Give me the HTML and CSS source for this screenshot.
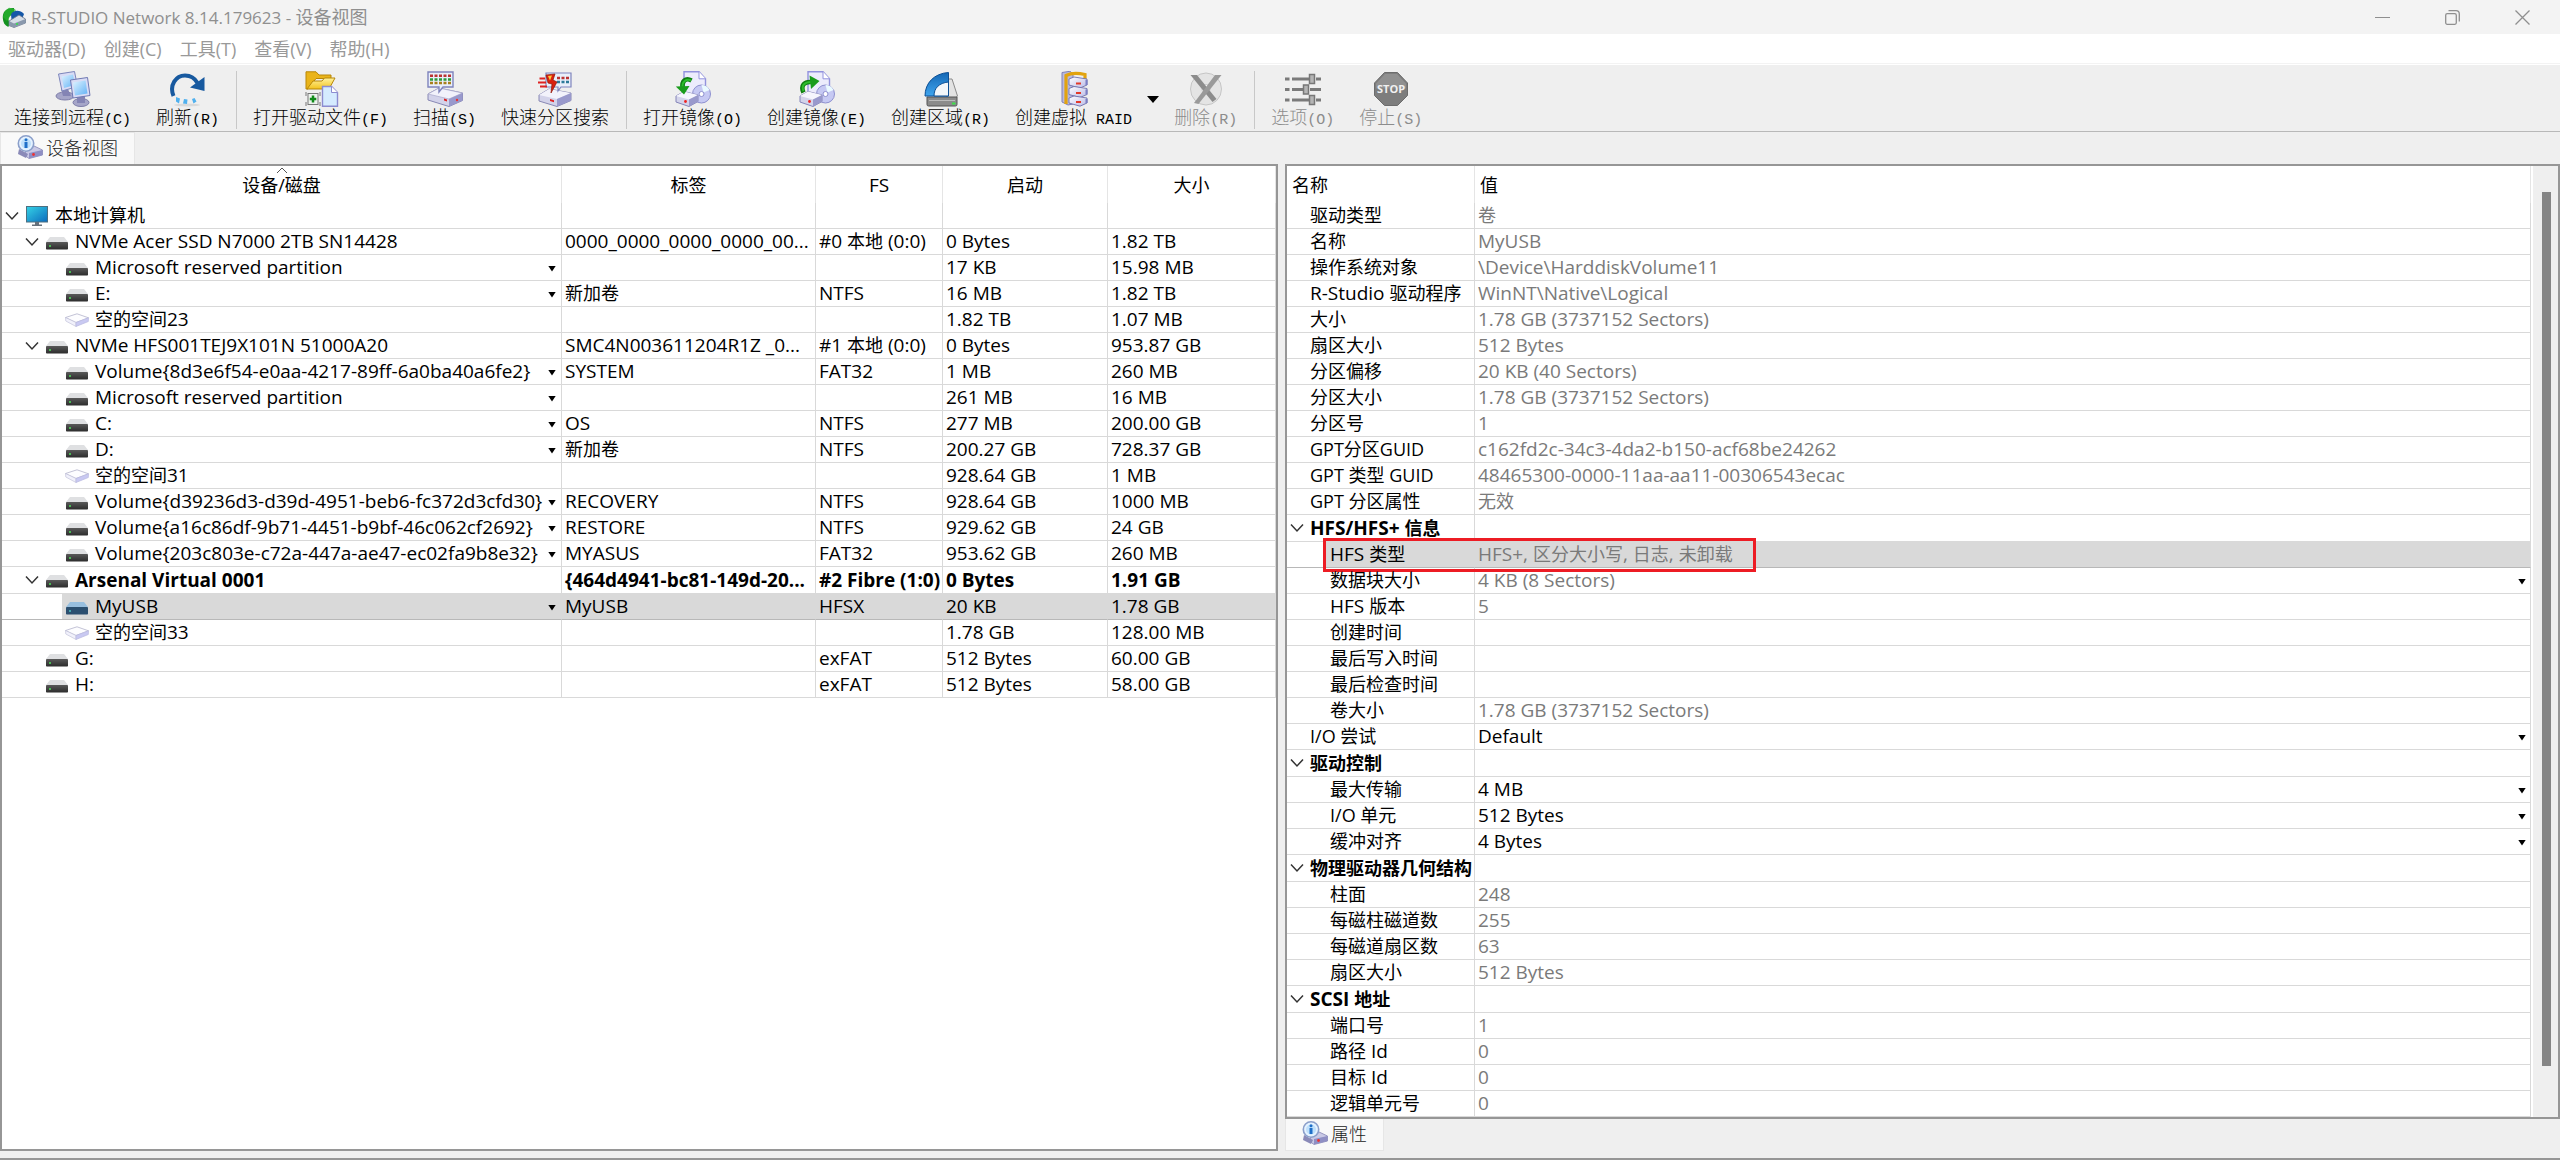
FILE: index.html
```html
<!DOCTYPE html>
<html lang="zh-CN">
<head>
<meta charset="utf-8">
<title>R-STUDIO Network 8.14.179623 - 设备视图</title>
<link rel="stylesheet" href="styles.css">
</head>
<body>
<svg class="defs" width="0" height="0" aria-hidden="true">
  <defs>
    <linearGradient id="g-screen" x1="0" y1="0" x2="1" y2="1"><stop offset="0" stop-color="#35d3e6"/><stop offset="1" stop-color="#0c6bbd"/></linearGradient>
    <linearGradient id="g-lcd" x1="0" y1="0" x2="1" y2="1"><stop offset="0" stop-color="#dff3ff"/><stop offset="1" stop-color="#62b2f5"/></linearGradient>
    <linearGradient id="g-box" x1="0" y1="0" x2="0" y2="1"><stop offset="0" stop-color="#595959"/><stop offset="1" stop-color="#2c2c2c"/></linearGradient>
    <linearGradient id="g-arc" x1="0" y1="0" x2="0" y2="1"><stop offset="0" stop-color="#1467b5"/><stop offset="1" stop-color="#3fa5ee"/></linearGradient>
    <linearGradient id="g-folder" x1="0" y1="0" x2="0" y2="1"><stop offset="0" stop-color="#fff3a0"/><stop offset="1" stop-color="#f3c21c"/></linearGradient>
    <linearGradient id="g-lav" x1="0" y1="0" x2="1" y2="1"><stop offset="0" stop-color="#ffffff"/><stop offset="1" stop-color="#b9b9e6"/></linearGradient>
  </defs>
  <symbol id="i-chevron" viewBox="0 0 14 10"><path d="M1 1.500 7 8l6-6.500" fill="none" stroke="#333" stroke-width="1.500"/></symbol>
  <symbol id="i-computer" viewBox="0 0 22 20"><rect x=".5" y=".5" width="21" height="15.500" fill="url(#g-screen)" stroke="#4d6f80"/><path d="M9 16h4v2.500h3V20H6v-1.500h3z" fill="#66707a"/></symbol>
  <symbol id="i-drive" viewBox="0 0 22 14"><path d="M4 1h14l4 5H0z" fill="#dfe0e2"/><rect y="6" width="22" height="7.500" rx=".8" fill="url(#g-box)"/><circle cx="4" cy="10" r="1" fill="#4ce05a"/></symbol>
  <symbol id="i-drive-sel" viewBox="0 0 22 14"><path d="M4 1h14l4 5H0z" fill="#98bfdf"/><rect y="6" width="22" height="7.500" rx=".8" fill="#2b4f70"/><circle cx="4" cy="10" r="1" fill="#4cc0c0"/></symbol>
  <symbol id="i-free" viewBox="0 0 24 14"><path d="M.5 4.500 12 .8l11.500 4L11 9.500z" fill="#fdfdff" stroke="#b4b4cc" stroke-width=".8"/><path d="M.5 4.500 11 9.500v4L.8 8z" fill="#f1f1fb" stroke="#c3c3da" stroke-width=".7"/><path d="M23.500 4.800 11 9.500v4l12.300-5z" fill="#c9c9f2" stroke="#b9b9e0" stroke-width=".7"/></symbol>
  <symbol id="i-tab" viewBox="0 0 26 24"><path d="m9 13 6-3 10.500 5v5L12 23.500l-4-3z" fill="#c9c9e6" stroke="#8585b5" stroke-width=".8"/><path d="m12 18 13.500-3v5L12 23.500z" fill="#8f8fc4"/><circle cx="16.500" cy="19.500" r="1.400" fill="#e33"/><path d="M2 14 1 19l8 4 2-4z" fill="#8a8ab8"/><circle cx="9" cy="8.500" r="7.700" fill="#e4f2ff" stroke="#8b9fca" stroke-width="1.600"/><circle cx="9" cy="8.500" r="5" fill="#bfe0fb"/><circle cx="9" cy="4.700" r="1.500" fill="#1f6fc8"/><path d="M7.500 7h3v6h-3z" fill="#1f6fc8"/></symbol>
  <symbol id="i-app" viewBox="0 0 24 21"><path d="M12 1C4 .5.500 5 .8 11c.2 4.500 2 7.500 5.500 9l1.700-4C5.500 13 6 8 12 7.500z" fill="#13911f"/><path d="M3 4 7 .8 13 2l2 4-6 2-4 6-4-4z" fill="#2bb531" opacity=".7"/><path d="M9 7.500C11 3 18 2.500 22 7l-1.500 4-11 2z" fill="#1457a8"/><path d="m7 14 10-6 6.500 4v4L12 20.500 7 18.500z" fill="#d5dde6" stroke="#65748a" stroke-width=".8"/><path d="m7 14 5 2.500L23.500 12v4L12 20.500 7 18.500z" fill="#8a99ad"/><circle cx="15" cy="17" r="1.100" fill="#35e04c"/></symbol>

  <symbol id="t-connect" viewBox="0 0 36 36"><ellipse cx="10" cy="25" rx="9" ry="4" fill="#a5a5c8" stroke="#7d7da8"/><ellipse cx="26" cy="31.500" rx="8" ry="4" fill="#a5a5c8" stroke="#7d7da8"/><path d="M6 18h7l3 7H8zM22 25h8v7h-8z" fill="#8484b4"/><path d="m3.500 3 16-2.500 3 15L7 20z" fill="#d9dcf5" stroke="#7c85bb"/><path d="m6.500 5.500 11.500-2 2 10.500-11 3z" fill="url(#g-lcd)"/><path d="m15.500 9 17-2.500 2.500 18-17 2.500z" fill="#d9dcf5" stroke="#6f78b3"/><path d="M18 11.500 30.500 9.500l2 13-12.500 2z" fill="url(#g-lcd)"/></symbol>
  <symbol id="t-refresh" viewBox="0 0 36 36"><ellipse cx="17" cy="34" rx="13" ry="1.500" fill="#d9d9d9"/><path d="M3.500 25C-1 14 6 4.500 15 4.500c6 0 10 3 12.500 7.500" fill="none" stroke="#17599f" stroke-width="4"/><path d="M34.500 6v14L20 16.500z" fill="#17599f"/><path d="m6 26 4 1.500-1 5-3-2zM14 28l3.500.5-.5 4.500-4-.5zM22 28l2.500-1 2 3.500-3 2z" fill="#4fb0ee"/></symbol>
  <symbol id="t-openfile" viewBox="0 0 36 36"><path d="M3 18V.8h10l3 3.200h12v3.500H13L5 18z" fill="#eab41a" stroke="#b88708"/><path d="m4 18 6-8h9l2.500-3H32l-6 11z" fill="url(#g-folder)" stroke="#b88708"/><rect x="5" y="22.500" width="10" height="11" fill="#eef3ee" stroke="#777"/><path d="M3 21v4M3 31v4M17 21v4M17 31v4" stroke="#777"/><path d="M10 24.500v7M6.800 28h6.500" stroke="#108a18" stroke-width="2.500"/><path d="M19.500 15.500h9l6 6v13.700h-15z" fill="#d5ebff" stroke="#8c8cd0" stroke-width="1.400"/><path d="M28.500 15.500v6h6" fill="#fff" stroke="#8c8cd0"/></symbol>
  <symbol id="t-scan" viewBox="0 0 36 36"><path d="m1 23 11-6 23.500 5v7.500L22 35.500 1 29z" fill="#d3d3ea" stroke="#8888b4"/><path d="m1 23 11-6 23.500 5L22 28z" fill="#f2f2fb" stroke="#a9a9cc" stroke-width=".7"/><path d="M22 28l13.500-6v7.500L22 35.500z" fill="#9999cc"/><path d="m17 27.500 3 1v2l-3-1z" fill="#d22"/><circle cx="30" cy="29" r="1.200" fill="#e33"/><path d="M1 1h25v15H16l-4 5v-5H1z" fill="#e9effa" stroke="#7f84bd" stroke-width="1.400"/><path d="M3 4.800h21" stroke="#b33" stroke-width="2.400" stroke-dasharray="3 1.500"/><path d="M3 8.500h21" stroke="#2c9a3a" stroke-width="2.400" stroke-dasharray="3 1.500"/><path d="M3 12h21" stroke="#a8801c" stroke-width="2.400" stroke-dasharray="3 1.500"/></symbol>
  <symbol id="t-fast" viewBox="0 0 36 36"><path d="m2 24 10-6 22 4v7.500L20 35.500 2 30z" fill="#d3d3ea" stroke="#8888b4"/><path d="m2 24 10-6 22 4-14 6z" fill="#f2f2fb"/><path d="M20 28l14-6v7.500L20 35.500z" fill="#9999cc"/><path d="m13 28 4 1.200v2L13 30z" fill="#d22"/><path d="M9 2h25v14H24l-3 4v-4H9z" fill="#e9effa" stroke="#7f84bd" stroke-width="1.200"/><path d="M20 7h12" stroke="#b33" stroke-width="2.500" stroke-dasharray="3 1.500"/><path d="M20 11h12" stroke="#2c7a9a" stroke-width="2.500" stroke-dasharray="3 1.500"/><path d="M9 4 18 3l-2 6 4 2-6 11 1-9-4-1z" fill="#d9210f" stroke="#8f1508" stroke-width=".7"/><path d="m11 5 4-.5-2 5z" fill="#ffcb3a"/><path d="M2.500 7.500H8M1 11.500h8M3 15.500h7" stroke="#d22" stroke-width="1.800"/></symbol>
  <symbol id="t-imgbase" viewBox="0 0 36 36"><path d="M9 .8h15l6.500 7V30H9z" fill="#ececfc" stroke="#9292dd" stroke-width="1.400"/><path d="M24 .8v7h6.500" fill="#fff" stroke="#9292dd"/><circle cx="26.500" cy="23" r="9" fill="#c6c9f3" stroke="#8e90cf"/><path d="M26.500 14a9 9 0 0 1 8 5l-6 2.500z" fill="#eafaff"/><circle cx="26.500" cy="23" r="2.500" fill="#fff" stroke="#8e90cf"/><path d="m1 25 8-4.500 14 3.500v6.500L14 35.500 1 31z" fill="#d3d3ea" stroke="#8585b8"/><path d="m1 25 8-4.500 14 3.500-9 4.500z" fill="#f5f5fd"/><path d="m14 28.500 9-4.500v6.500L14 35.500z" fill="#9999cc"/><circle cx="10.500" cy="30.500" r="1.400" fill="#e22"/></symbol>
  <symbol id="t-openimg" viewBox="0 0 36 36"><use href="#t-imgbase"/><path d="M16.500 9.500C10.500 6 6.500 10.500 7.500 17" fill="none" stroke="#0f7d12" stroke-width="4.500"/><path d="M16 9.500C11 7.500 7 10.500 7.500 16" fill="none" stroke="#2cbd2c" stroke-width="2"/><path d="M.8 15.500 14.500 15 9 23.500z" fill="#1a9c1c"/></symbol>
  <symbol id="t-makeimg" viewBox="0 0 36 36"><use href="#t-imgbase"/><path d="M4.500 21.500C1 14 6 10.500 12 11" fill="none" stroke="#0f7d12" stroke-width="4.500"/><path d="M4.500 20C2 14 6 11 12 11" fill="none" stroke="#2cbd2c" stroke-width="2"/><path d="M10.500 4.500 20.500 10l-8.500 8z" fill="#1a9c1c"/></symbol>
  <symbol id="t-region" viewBox="0 0 36 36"><path d="M24 8h5l5.500 17-2 2H24z" fill="#e3e3e3" stroke="#8a8a8a"/><path d="M4 26h30v7.500q0 1.500-1.500 1.500h-27Q4 35 4 33.500z" fill="#8b8b8b" stroke="#555"/><path d="M6 29.500h26" stroke="#bbb"/><path d="M29 32.500h3.500" stroke="#3ce046" stroke-width="2"/><path d="M2 25C2 12 11 2.500 25.500 1.500V25z" fill="url(#g-arc)" stroke="#0d4f94"/><path d="M11 25c0-8 5-13 14.500-14V25z" fill="#f2f6fa" stroke="#0d4f94"/></symbol>
  <symbol id="t-raid" viewBox="0 0 36 36"><path d="m6 1.500 8-1.200L17 3v30l-5 1-6-3z" fill="#b9b9dd" stroke="#8080b4"/><path d="M10 33V4.500Q17 1 29 3.500v5" fill="none" stroke="#e2a30e" stroke-width="3.200"/><g stroke="#6e70ac" stroke-width=".9"><path d="m13 8 5-2 13 2v6l-7 3-11-3z" fill="url(#g-lav)"/><path d="m13 17.500 5-2 13 2v6l-7 3-11-3z" fill="url(#g-lav)"/><path d="m13 27 5-2 13 2v5l-7 3.200L13 32z" fill="url(#g-lav)"/></g><path d="M20 12.500h5M20 22h5M20 31h5" stroke="#e33a2a" stroke-width="2"/><path d="M30.500 9v5M30.500 18.500v5M30.500 28v4" stroke="#7b7fc4" stroke-width="2"/></symbol>
  <symbol id="t-delete" viewBox="0 0 36 36"><ellipse cx="18" cy="18" rx="15.500" ry="16" fill="#e4e4e4" stroke="#c6c6c6"/><ellipse cx="18" cy="18" rx="4" ry="4.500" fill="#fafafa" stroke="#c9c9c9"/><path d="M2.500 4H9l19.500 24-4 3z" fill="#8c8c8c"/><path d="M33.500 4H27L6 32l4.500 1z" fill="#9a9a9a"/></symbol>
  <symbol id="t-options" viewBox="0 0 36 36"><path d="M0 8h4.500M7 8h17M31 8h5M0 18.500h4.500M7 18.500h11M25 18.500h11M0 29h4.500M7 29h17M31 29h5" stroke="#7a7a7a" stroke-width="3"/><g fill="#b5b5b5" stroke="#777" stroke-width="1.500"><rect x="24.500" y="3.500" width="5" height="9"/><rect x="18.500" y="14" width="5" height="9"/><rect x="24.500" y="24.500" width="5" height="9"/></g></symbol>
</svg>

<header class="titlebar">
  <svg class="app-icon"><use href="#i-app"/></svg>
  <h1 class="title">R-STUDIO Network 8.14.179623 - <span class="zh">设备视图</span></h1>
  <div class="window-buttons">
    <button aria-label="最小化"><svg width="15" height="15"><path d="M0 7.500h15" stroke="#8f8f8f"/></svg></button>
    <button aria-label="还原"><svg width="15" height="15" fill="none" stroke="#8f8f8f" stroke-width="1.300"><rect x=".7" y="3.700" width="10.600" height="10.600" rx="1.500"/><path d="M3.500.7H11Q14.300.7 14.300 4v7.500"/></svg></button>
    <button aria-label="关闭"><svg width="15" height="15"><path d="m.5.500 14 14m0-14-14 14" stroke="#8f8f8f" stroke-width="1.300"/></svg></button>
  </div>
</header>
<nav class="menubar">
  <button>驱动器(D)</button>
  <button>创建(C)</button>
  <button>工具(T)</button>
  <button>查看(V)</button>
  <button>帮助(H)</button>
</nav>
<div class="toolbar">
  <button class="tool"><svg><use href="#t-connect"/></svg><span class="label">连接到远程<span class="mono">(C)</span></span></button>
  <button class="tool"><svg><use href="#t-refresh"/></svg><span class="label">刷新<span class="mono">(R)</span></span></button>
  <i class="sep"></i>
  <button class="tool"><svg><use href="#t-openfile"/></svg><span class="label">打开驱动文件<span class="mono">(F)</span></span></button>
  <button class="tool"><svg><use href="#t-scan"/></svg><span class="label">扫描<span class="mono">(S)</span></span></button>
  <button class="tool"><svg><use href="#t-fast"/></svg><span class="label">快速分区搜索</span></button>
  <i class="sep"></i>
  <button class="tool"><svg><use href="#t-openimg"/></svg><span class="label">打开镜像<span class="mono">(O)</span></span></button>
  <button class="tool"><svg><use href="#t-makeimg"/></svg><span class="label">创建镜像<span class="mono">(E)</span></span></button>
  <button class="tool"><svg><use href="#t-region"/></svg><span class="label">创建区域<span class="mono">(R)</span></span></button>
  <button class="tool"><svg><use href="#t-raid"/></svg><span class="label">创建虚拟<span class="mono"> RAID</span></span></button>
  <button class="tool-drop" aria-label="更多"><svg width="12" height="7"><path d="M0 0h12L6 7z"/></svg></button>
  <button class="tool" disabled><svg><use href="#t-delete"/></svg><span class="label">删除<span class="mono">(R)</span></span></button>
  <i class="sep"></i>
  <button class="tool" disabled><svg><use href="#t-options"/></svg><span class="label">选项<span class="mono">(O)</span></span></button>
  <button class="tool" disabled><svg viewBox="0 0 36 36"><path d="M11.500 1.500h13L34.500 12v12.500l-10 10h-13l-10-10V12z" fill="#7d7d7d" stroke="#6c6c6c"/><path d="M12 3h12l9 9.500v5H3v-5z" fill="#909090"/><text x="18" y="22" text-anchor="middle" class="stop-text">STOP</text></svg><span class="label">停止<span class="mono">(S)</span></span></button>
</div>
<div class="tabs top">
  <button class="tab"><svg><use href="#i-tab"/></svg>设备视图</button>
</div>

<main class="panes">
  <section class="pane devices">
    <table class="grid">
      <colgroup><col class="c-device"><col class="c-label"><col class="c-fs"><col class="c-start"><col></colgroup>
      <thead>
        <tr><th class="zh"><svg class="sort" width="12" height="7"><path d="m1 6 5-5 5 5" fill="none" stroke="#555"/></svg>设备/磁盘</th><th class="zh">标签</th><th>FS</th><th class="zh">启动</th><th class="zh">大小</th></tr>
      </thead>
      <tbody>
        <tr><td><div class="node d0"><button class="toggle" aria-label="折叠"><svg><use href="#i-chevron"/></svg></button><svg class="ic pc"><use href="#i-computer"/></svg><span class="name zh">本地计算机</span></div></td><td></td><td></td><td></td><td></td></tr>
        <tr><td><div class="node d1"><button class="toggle" aria-label="折叠"><svg><use href="#i-chevron"/></svg></button><svg class="ic"><use href="#i-drive"/></svg><span class="name">NVMe Acer SSD N7000 2TB SN14428</span></div></td><td>0000_0000_0000_0000_00...</td><td>#0 <span class="zh">本地</span> (0:0)</td><td>0 Bytes</td><td>1.82 TB</td></tr>
        <tr><td><div class="node d3"><svg class="ic"><use href="#i-drive"/></svg><span class="name">Microsoft reserved partition</span><button class="drop" aria-label="展开"></button></div></td><td></td><td></td><td>17 KB</td><td>15.98 MB</td></tr>
        <tr><td><div class="node d3"><svg class="ic"><use href="#i-drive"/></svg><span class="name">E:</span><button class="drop" aria-label="展开"></button></div></td><td class="zh">新加卷</td><td>NTFS</td><td>16 MB</td><td>1.82 TB</td></tr>
        <tr><td><div class="node d3"><svg class="ic free"><use href="#i-free"/></svg><span class="name"><span class="zh">空的空间</span>23</span></div></td><td></td><td></td><td>1.82 TB</td><td>1.07 MB</td></tr>
        <tr><td><div class="node d1"><button class="toggle" aria-label="折叠"><svg><use href="#i-chevron"/></svg></button><svg class="ic"><use href="#i-drive"/></svg><span class="name">NVMe HFS001TEJ9X101N 51000A20</span></div></td><td>SMC4N003611204R1Z _0...</td><td>#1 <span class="zh">本地</span> (0:0)</td><td>0 Bytes</td><td>953.87 GB</td></tr>
        <tr><td><div class="node d3"><svg class="ic"><use href="#i-drive"/></svg><span class="name">Volume{8d3e6f54-e0aa-4217-89ff-6a0ba40a6fe2}</span><button class="drop" aria-label="展开"></button></div></td><td>SYSTEM</td><td>FAT32</td><td>1 MB</td><td>260 MB</td></tr>
        <tr><td><div class="node d3"><svg class="ic"><use href="#i-drive"/></svg><span class="name">Microsoft reserved partition</span><button class="drop" aria-label="展开"></button></div></td><td></td><td></td><td>261 MB</td><td>16 MB</td></tr>
        <tr><td><div class="node d3"><svg class="ic"><use href="#i-drive"/></svg><span class="name">C:</span><button class="drop" aria-label="展开"></button></div></td><td>OS</td><td>NTFS</td><td>277 MB</td><td>200.00 GB</td></tr>
        <tr><td><div class="node d3"><svg class="ic"><use href="#i-drive"/></svg><span class="name">D:</span><button class="drop" aria-label="展开"></button></div></td><td class="zh">新加卷</td><td>NTFS</td><td>200.27 GB</td><td>728.37 GB</td></tr>
        <tr><td><div class="node d3"><svg class="ic free"><use href="#i-free"/></svg><span class="name"><span class="zh">空的空间</span>31</span></div></td><td></td><td></td><td>928.64 GB</td><td>1 MB</td></tr>
        <tr><td><div class="node d3"><svg class="ic"><use href="#i-drive"/></svg><span class="name">Volume{d39236d3-d39d-4951-beb6-fc372d3cfd30}</span><button class="drop" aria-label="展开"></button></div></td><td>RECOVERY</td><td>NTFS</td><td>928.64 GB</td><td>1000 MB</td></tr>
        <tr><td><div class="node d3"><svg class="ic"><use href="#i-drive"/></svg><span class="name">Volume{a16c86df-9b71-4451-b9bf-46c062cf2692}</span><button class="drop" aria-label="展开"></button></div></td><td>RESTORE</td><td>NTFS</td><td>929.62 GB</td><td>24 GB</td></tr>
        <tr><td><div class="node d3"><svg class="ic"><use href="#i-drive"/></svg><span class="name">Volume{203c803e-c72a-447a-ae47-ec02fa9b8e32}</span><button class="drop" aria-label="展开"></button></div></td><td>MYASUS</td><td>FAT32</td><td>953.62 GB</td><td>260 MB</td></tr>
        <tr class="strong"><td><div class="node d1"><button class="toggle" aria-label="折叠"><svg><use href="#i-chevron"/></svg></button><svg class="ic"><use href="#i-drive"/></svg><span class="name">Arsenal Virtual 0001</span></div></td><td>{464d4941-bc81-149d-20...</td><td>#2 Fibre (1:0)</td><td>0 Bytes</td><td>1.91 GB</td></tr>
        <tr class="selected"><td><div class="node d3"><svg class="ic"><use href="#i-drive-sel"/></svg><span class="name">MyUSB</span><button class="drop" aria-label="展开"></button></div></td><td>MyUSB</td><td>HFSX</td><td>20 KB</td><td>1.78 GB</td></tr>
        <tr><td><div class="node d3"><svg class="ic free"><use href="#i-free"/></svg><span class="name"><span class="zh">空的空间</span>33</span></div></td><td></td><td></td><td>1.78 GB</td><td>128.00 MB</td></tr>
        <tr><td><div class="node d2"><svg class="ic"><use href="#i-drive"/></svg><span class="name">G:</span></div></td><td></td><td>exFAT</td><td>512 Bytes</td><td>60.00 GB</td></tr>
        <tr><td><div class="node d2"><svg class="ic"><use href="#i-drive"/></svg><span class="name">H:</span></div></td><td></td><td>exFAT</td><td>512 Bytes</td><td>58.00 GB</td></tr>
      </tbody>
    </table>
  </section>

  <section class="side">
    <div class="pane props">
      <table class="grid">
        <colgroup><col class="c-prop"><col></colgroup>
        <thead><tr><th class="zh">名称</th><th class="zh">值</th></tr></thead>
        <tbody>
          <tr><td><div class="prop p1 zh">驱动类型</div></td><td class="ro zh">卷</td></tr>
          <tr><td><div class="prop p1 zh">名称</div></td><td class="ro">MyUSB</td></tr>
          <tr><td><div class="prop p1 zh">操作系统对象</div></td><td class="ro">\Device\HarddiskVolume11</td></tr>
          <tr><td><div class="prop p1">R-Studio <span class="zh">驱动程序</span></div></td><td class="ro">WinNT\Native\Logical</td></tr>
          <tr><td><div class="prop p1 zh">大小</div></td><td class="ro">1.78 GB (3737152 Sectors)</td></tr>
          <tr><td><div class="prop p1 zh">扇区大小</div></td><td class="ro">512 Bytes</td></tr>
          <tr><td><div class="prop p1 zh">分区偏移</div></td><td class="ro">20 KB (40 Sectors)</td></tr>
          <tr><td><div class="prop p1 zh">分区大小</div></td><td class="ro">1.78 GB (3737152 Sectors)</td></tr>
          <tr><td><div class="prop p1 zh">分区号</div></td><td class="ro">1</td></tr>
          <tr><td><div class="prop p1 zh">GPT分区GUID</div></td><td class="ro">c162fd2c-34c3-4da2-b150-acf68be24262</td></tr>
          <tr><td><div class="prop p1 zh">GPT 类型 GUID</div></td><td class="ro">48465300-0000-11aa-aa11-00306543ecac</td></tr>
          <tr><td><div class="prop p1 zh">GPT 分区属性</div></td><td class="ro zh">无效</td></tr>
          <tr class="strong"><td><div class="prop"><button class="toggle" aria-label="折叠"><svg><use href="#i-chevron"/></svg></button>HFS/HFS+ <span class="zh">信息</span></div></td><td></td></tr>
          <tr class="selected"><td><div class="prop p2">HFS <span class="zh">类型</span><span class="callout"></span></div></td><td class="ro">HFS+, <span class="zh">区分大小写</span>, <span class="zh">日志</span>, <span class="zh">未卸载</span></td></tr>
          <tr><td><div class="prop p2 zh">数据块大小</div></td><td class="ro"><div class="value">4 KB (8 Sectors)<button class="drop" aria-label="展开"></button></div></td></tr>
          <tr><td><div class="prop p2">HFS <span class="zh">版本</span></div></td><td class="ro">5</td></tr>
          <tr><td><div class="prop p2 zh">创建时间</div></td><td></td></tr>
          <tr><td><div class="prop p2 zh">最后写入时间</div></td><td></td></tr>
          <tr><td><div class="prop p2 zh">最后检查时间</div></td><td></td></tr>
          <tr><td><div class="prop p2 zh">卷大小</div></td><td class="ro">1.78 GB (3737152 Sectors)</td></tr>
          <tr><td><div class="prop p1 zh">I/O 尝试</div></td><td><div class="value">Default<button class="drop" aria-label="展开"></button></div></td></tr>
          <tr class="strong"><td><div class="prop zh"><button class="toggle" aria-label="折叠"><svg><use href="#i-chevron"/></svg></button>驱动控制</div></td><td></td></tr>
          <tr><td><div class="prop p2 zh">最大传输</div></td><td><div class="value">4 MB<button class="drop" aria-label="展开"></button></div></td></tr>
          <tr><td><div class="prop p2 zh">I/O 单元</div></td><td><div class="value">512 Bytes<button class="drop" aria-label="展开"></button></div></td></tr>
          <tr><td><div class="prop p2 zh">缓冲对齐</div></td><td><div class="value">4 Bytes<button class="drop" aria-label="展开"></button></div></td></tr>
          <tr class="strong"><td><div class="prop zh"><button class="toggle" aria-label="折叠"><svg><use href="#i-chevron"/></svg></button>物理驱动器几何结构</div></td><td></td></tr>
          <tr><td><div class="prop p2 zh">柱面</div></td><td class="ro">248</td></tr>
          <tr><td><div class="prop p2 zh">每磁柱磁道数</div></td><td class="ro">255</td></tr>
          <tr><td><div class="prop p2 zh">每磁道扇区数</div></td><td class="ro">63</td></tr>
          <tr><td><div class="prop p2 zh">扇区大小</div></td><td class="ro">512 Bytes</td></tr>
          <tr class="strong"><td><div class="prop"><button class="toggle" aria-label="折叠"><svg><use href="#i-chevron"/></svg></button>SCSI <span class="zh">地址</span></div></td><td></td></tr>
          <tr><td><div class="prop p2 zh">端口号</div></td><td class="ro">1</td></tr>
          <tr><td><div class="prop p2"><span class="zh">路径</span> Id</div></td><td class="ro">0</td></tr>
          <tr><td><div class="prop p2"><span class="zh">目标</span> Id</div></td><td class="ro">0</td></tr>
          <tr><td><div class="prop p2 zh">逻辑单元号</div></td><td class="ro">0</td></tr>
        </tbody>
      </table>
      <div class="scrollbar"><div class="thumb"></div></div>
    </div>
    <div class="tabs bottom">
      <button class="tab"><svg><use href="#i-tab"/></svg>属性</button>
    </div>
  </section>
</main>
</body>
</html>
```
FILE: styles.css
```css
* { box-sizing: border-box; }

body {
  margin: 0;
  min-height: 100vh;
  display: flex;
  flex-direction: column;
  background: #efefef;
  border-bottom: 2px solid #969696;
  color: #000;
  font: 19px/24px "Open Sans", "Noto Sans CJK SC", sans-serif;
}

button {
  padding: 0;
  border: 0;
  background: none;
  color: inherit;
  font: inherit;
}

svg { display: block; flex: none; }
.defs { position: absolute; }
.zh { font-size: 18px; }

/* title bar and menu */
.titlebar {
  display: flex;
  align-items: center;
  height: 34px;
  padding: 0 3px 0 2px;
  background: #f3f3f3;
  color: #8f8f8f;
}
.app-icon { width: 24px; height: 21px; }
.title { flex: 1; margin: 0 0 0 5px; font-size: 17px; font-weight: 400; }
.window-buttons { display: flex; }
.window-buttons button {
  display: grid;
  place-items: center;
  width: 70px;
  height: 32px;
}

.menubar {
  display: flex;
  gap: 18px;
  height: 30px;
  padding: 1px 8px 0;
  background: #fff;
  border-bottom: 1px solid #f3f3f3;
  color: #999;
  font-size: 18px;
}

/* toolbar */
.toolbar {
  display: flex;
  gap: 1px;
  height: 68px;
  padding: 6px 0 0 2px;
  border-top: 1px solid #fff;
  border-bottom: 1px solid #b8b8b8;
}
.tool {
  display: flex;
  flex-direction: column;
  align-items: center;
  height: 56px;
  padding: 0 12px;
  font: 18px/20px "Noto Sans CJK SC", sans-serif;
  font-weight: 300;
  white-space: pre;
}
.tool svg { width: 36px; height: 36px; }
.tool .label { height: 20px; margin-top: -1px; }
.tool:disabled { color: #8c8c8c; }
.mono { font: 15px/20px "Liberation Mono", monospace; }
.stop-text { fill: #f0f0f0; font: 700 11px "Open Sans", sans-serif; }
.sep { width: 1px; height: 58px; margin: 0 3px 0 4px; background: #c8c8c8; }
.tool-drop { display: grid; place-items: center; width: 16px; height: 56px; }

/* tabs */
.tabs { display: flex; height: 32px; }
.tab {
  display: flex;
  align-items: center;
  gap: 3px;
  height: 32px;
  padding: 0 16px 4px;
  background: #f9f9f9;
  border: 1px solid #e6e6e6;
  color: #222;
  font: 18px/24px "Noto Sans CJK SC", sans-serif;
  font-weight: 300;
}
.top .tab { border-bottom: 0; }
.bottom .tab { border-top: 0; }
.tab svg { width: 26px; height: 24px; }

/* panes */
.panes {
  flex: 1;
  display: grid;
  grid-template-columns: 1278fr 1275fr;
  gap: 7px;
  padding-bottom: 7px;
}
.pane { background: #fff; border: 2px solid #969696; }
.props { display: flex; }
.props .grid { flex: 1; width: auto; }
.scrollbar {
  width: 27px;
  padding: 26px 7px 51px 9px;
  border-left: 2px solid #fff;
  background: #efefef;
}
.thumb { height: 100%; background: #858585; }

.grid {
  width: 100%;
  table-layout: fixed;
  border-spacing: 0;
}
.c-device { width: 560px; }
.c-label { width: 254px; }
.c-fs { width: 127px; }
.c-start { width: 165px; }
.c-prop { width: 188px; }

th {
  position: relative;
  height: 37px;
  padding: 0;
  border-right: 1px solid #e5e5e5;
  font-weight: 400;
}
.props th { padding-left: 5px; text-align: left; }
.sort { position: absolute; top: 1px; left: calc(50% - 6px); }

td {
  height: 26px;
  padding: 0 0 0 3px;
  border-right: 1px solid #d9d9d9;
  border-bottom: 1px solid #d9d9d9;
  line-height: 25px;
  white-space: nowrap;
}
td:first-child { padding: 0; }
.ro { color: #7a7a7a; }

.node, .prop, .value { display: flex; align-items: center; height: 25px; white-space: pre; }
.prop { position: relative; padding-left: 3px; }
.d1 { margin-left: 20px; }
.d2 { margin-left: 40px; }
.d3 { margin-left: 60px; }
.p1 { padding-left: 23px; }
.p2 { margin-left: 39px; padding-left: 4px; }
.prop .toggle { margin-left: -3px; margin-right: 3px; }

.toggle { flex: none; display: grid; place-items: center; width: 20px; height: 24px; }
.toggle svg { width: 14px; height: 10px; }
.ic { width: 22px; height: 14px; margin: 2px 7px 0 4px; }
.pc { height: 20px; margin-top: 0; }
.free { width: 24px; margin: 0 6px 0 3px; }
.name { flex: 1; min-width: 0; }

.drop { flex: none; display: grid; place-items: center; width: 18px; height: 24px; padding-top: 2px; }
.drop::before {
  content: "";
  width: 8px;
  height: 6px;
  background: #000;
  clip-path: polygon(0 0, 100% 0, 50% 100%);
}
.value { justify-content: space-between; }
.value .drop { width: 16px; }

.strong td { height: 27px; font-weight: 700; }
.selected td { border-color: #b8b8b8; border-right-color: #d9d9d9; background: #d9d9d9; }
.selected td:first-child { background: none; }
.selected .node, .selected .prop { background: #d9d9d9; }

/* red highlight drawn over the selected property */
.callout {
  position: absolute;
  top: -4px;
  left: -3px;
  width: 433px;
  height: 34px;
  border: 3px solid #ed1c24;
}
```
